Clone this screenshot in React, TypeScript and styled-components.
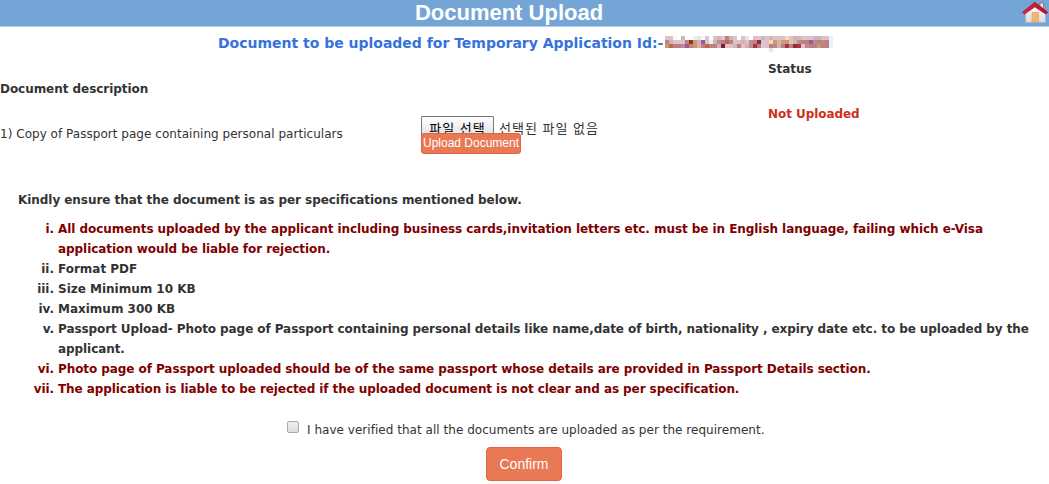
import styled, { createGlobalStyle } from "styled-components"

const GlobalStyle = createGlobalStyle`
  * {
    box-sizing: border-box;
  }

  body {
    margin: 0;
    background: #fff;
    color: #333;
    font: 12px/20px "DejaVu Sans", sans-serif;
    overflow: hidden;
  }
`

type RuleType = {
  number: string
  lines: string[]
  spacing: number
  warning?: boolean
}

const rules: RuleType[] = [
  {
    number: "i.",
    lines: [
      "All documents uploaded by the applicant including business cards,invitation letters etc. must be in English language, failing which e-Visa",
      "application would be liable for rejection.",
    ],
    spacing: -0.06,
    warning: true,
  },
  { number: "ii.", lines: ["Format PDF"], spacing: -0.01 },
  { number: "iii.", lines: ["Size Minimum 10 KB"], spacing: -0.01 },
  { number: "iv.", lines: ["Maximum 300 KB"], spacing: -0.01 },
  {
    number: "v.",
    lines: [
      "Passport Upload- Photo page of Passport containing personal details like name,date of birth, nationality , expiry date etc. to be uploaded by the",
      "applicant.",
    ],
    spacing: -0.075,
  },
  {
    number: "vi.",
    lines: ["Photo page of Passport uploaded should be of the same passport whose details are provided in Passport Details section."],
    spacing: -0.072,
    warning: true,
  },
  {
    number: "vii.",
    lines: ["The application is liable to be rejected if the uploaded document is not clear and as per specification."],
    spacing: -0.078,
    warning: true,
  },
]

// masked application id, one colour letter per 4px cell
const maskColors: Record<string, string> = {
  a: "#e0c0c4",
  b: "#d4b2ae",
  c: "#c9bab8",
  d: "#fff6e6",
  e: "#e6f0ff",
  f: "#d9c3de",
  g: "#bd7f80",
  h: "#a9344a",
  i: "#962b2c",
  j: "#bd6650",
  k: "#9a5b9e",
  l: "#c89a78",
  m: "#9e3208",
  n: "#f2dcb0",
  o: "#b98c94",
  p: "#751c36",
  q: "#d99a68",
  r: "#e0e6ea",
}

const maskRows = [
  "aad.c..erdf.abfgca.ar.afcabaaanabcaaacbaae",
  "gcafagmlbkaecogjgaabaogifanlbqlaboggkogoge",
  "ljggokglbgjggbpaacgabohgfagobghgihaogglgge",
  "..........................r...............",
]

export default function App() {
  return (
    <Page>
      <GlobalStyle />
      <TitleBar>
        <Title>Document Upload</Title>
        <HomeIcon />
      </TitleBar>
      <ApplicationId>
        <span>Document to be uploaded for Temporary Application Id:-</span>
        <MaskedId />
      </ApplicationId>
      <Documents>
        <Heading>Document description</Heading>
        <StatusCell>Status</StatusCell>
        <Description>1) Copy of Passport page containing personal particulars</Description>
        <Upload>
          <FilePicker>
            <FileButton>파일 선택</FileButton>
            <FileName>선택된 파일 없음</FileName>
          </FilePicker>
          <UploadButton>Upload Document</UploadButton>
        </Upload>
        <StatusCell $missing>Not Uploaded</StatusCell>
      </Documents>
      <Notice>Kindly ensure that the document is as per specifications mentioned below.</Notice>
      <Rules>
        {rules.map((rule) => (
          <Rule key={rule.number} $warning={rule.warning} $spacing={rule.spacing}>
            <RuleNumber>{rule.number}</RuleNumber>
            <div>
              {rule.lines.map((line) => (
                <RuleLine key={line}>{line}</RuleLine>
              ))}
            </div>
          </Rule>
        ))}
      </Rules>
      <Verify>
        <Checkbox type="checkbox" />
        <span>I have verified that all the documents are uploaded as per the requirement.</span>
      </Verify>
      <ConfirmButton>Confirm</ConfirmButton>
    </Page>
  )
}

function MaskedId() {
  return (
    <svg width="168" height="16" shapeRendering="crispEdges">
      {maskRows.map((row, y) =>
        row.split("").map((cell, x) =>
          cell === "." ? null : (
            <rect key={x + "-" + y} x={x * 4} y={y * 4} width="4" height="4" fill={maskColors[cell]} />
          )
        )
      )}
    </svg>
  )
}

function HomeIcon() {
  return (
    <svg width="28" height="26" viewBox="0 0 28 26">
      <defs>
        <linearGradient id="wall" x1="0" y1="0" x2="0" y2="1">
          <stop offset="0" stopColor="#fff" />
          <stop offset="1" stopColor="#d9d9df" />
        </linearGradient>
        <linearGradient id="roof" x1="0" y1="0" x2="1" y2="0">
          <stop offset="0" stopColor="#d52b3d" />
          <stop offset="1" stopColor="#a90d22" />
        </linearGradient>
      </defs>
      <path d="M19 3h3.5v7L19 7z" fill="#e9e4ea" stroke="#a33445" strokeWidth=".6" />
      <path d="M4.5 12.5L14 4.5l10.5 8V22.4h-20z" fill="url(#wall)" stroke="#aaa9b5" strokeWidth=".6" />
      <path d="M11 12.5h6.5v9.2H11z" fill="#f5b568" stroke="#d99d66" strokeWidth=".6" />
      <path d="M1.6 12.2L13.8 2.2l12.9 10-1.8 1.9L13.8 6.8 3.6 14.1z" fill="url(#roof)" stroke="#b51b30" strokeWidth=".9" strokeLinejoin="round" />
    </svg>
  )
}

const Page = styled.div`
  width: 1049px;
  height: 484px;
`

const TitleBar = styled.header`
  display: grid;
  grid-template-columns: 1fr 28px;
  height: 27px;
  background: #74a5d6;
  border-bottom: 1px solid #b4d0ea;
`

const Title = styled.h1`
  margin: 0;
  padding-right: 3px;
  text-align: center;
  color: #fff;
  font: bold 22px/25px "Liberation Sans", sans-serif;
`

const ApplicationId = styled.div`
  display: flex;
  height: 32px;
  padding: 6px 0 0 218px;
  color: #3572dd;
  font-size: 14px;
  font-weight: bold;
  letter-spacing: -0.01px;

  span {
    width: 447px;
    white-space: nowrap;
  }

  svg {
    margin-top: 3px;
  }
`

const Documents = styled.section`
  display: grid;
  grid-template-columns: 421px 347px 1fr;
  grid-template-rows: 45px 86px;
`

const Heading = styled.b`
  grid-column: 1 / 3;
  padding-top: 20px;
  letter-spacing: -0.05px;
`

const StatusCell = styled.div<{ $missing?: boolean }>`
  font-weight: bold;
  letter-spacing: -0.06px;
  color: ${({ $missing }) => ($missing ? "#cb2f20" : "#333")};
`

const Description = styled.div`
  padding-top: 20px;
  letter-spacing: 0.03px;
`

const Upload = styled.div`
  padding-top: 12px;
`

const FilePicker = styled.div`
  display: flex;
  gap: 5px;
  height: 17px;
  font: 13px/25px "Liberation Sans", "Noto Sans CJK KR", sans-serif;
`

const FileButton = styled.button`
  width: 73px;
  height: 24px;
  padding: 1px 0 0;
  border: 1px solid #777;
  border-radius: 1px;
  background: linear-gradient(#fff, #ddd);
  color: #000;
  font: inherit;
  line-height: 20px;
  letter-spacing: 1px;
`

const FileName = styled.span`
  letter-spacing: 1px;
`

const UploadButton = styled.button`
  position: relative;
  display: block;
  width: 100px;
  height: 21px;
  padding: 0 0 1px;
  border: 1px solid #e4623d;
  border-radius: 3px;
  background: #e97855;
  color: #fff;
  font: 12px/18px "Liberation Sans", sans-serif;
`

const Notice = styled.b`
  display: block;
  height: 29px;
  padding-left: 18px;
  letter-spacing: -0.055px;
`

const Rules = styled.div`
  height: 201px;
`

const Rule = styled.div<{ $warning?: boolean; $spacing: number }>`
  display: grid;
  grid-template-columns: 54px 1fr;
  gap: 4px;
  font-weight: bold;
  letter-spacing: ${({ $spacing }) => $spacing}px;
  color: ${({ $warning }) => ($warning ? "#800000" : "#333")};
`

const RuleNumber = styled.span`
  text-align: right;
`

const RuleLine = styled.div`
  height: 20px;
  white-space: nowrap;
`

const Verify = styled.label`
  display: flex;
  gap: 8px;
  height: 27px;
  padding-left: 287px;
  letter-spacing: 0.03px;
`

const Checkbox = styled.input`
  appearance: none;
  width: 12px;
  height: 12px;
  margin: 1px 0 0;
  border: 1px solid #aaa;
  border-radius: 2px;
  background: linear-gradient(#eee, #ddd);
`

const ConfirmButton = styled.button`
  display: block;
  width: 76px;
  height: 34px;
  margin-left: 486px;
  border: 1px solid #e4623d;
  border-radius: 4px;
  background: #e97855;
  color: #fff;
  font: 14px "Liberation Sans", sans-serif;
`
